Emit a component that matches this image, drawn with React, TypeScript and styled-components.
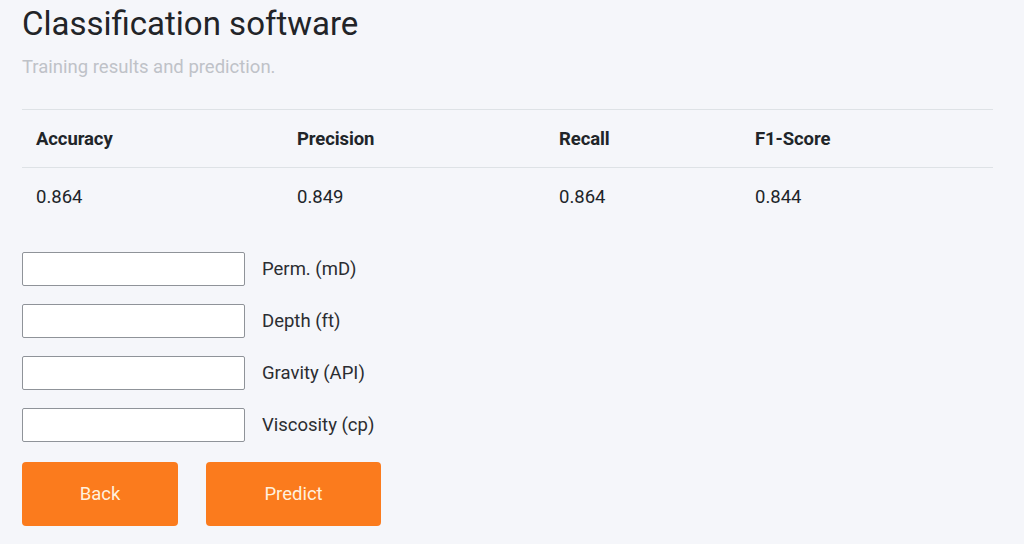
import styled, { createGlobalStyle } from 'styled-components';

const GlobalStyle = createGlobalStyle`
  body {
    margin: 0;
    background: #f5f6fa;
    font-family: Roboto, "Liberation Sans", sans-serif;
    color: #212529;
  }
`;

const metrics = [
  { name: 'Accuracy', value: '0.864' },
  { name: 'Precision', value: '0.849' },
  { name: 'Recall', value: '0.864' },
  { name: 'F1-Score', value: '0.844' },
];

const fields = ['Perm. (mD)', 'Depth (ft)', 'Gravity (API)', 'Viscosity (cp)'];

const App = () => {
  return (
    <Page>
      <GlobalStyle />
      <Title>Classification software</Title>
      <Subtitle>Training results and prediction.</Subtitle>

      <Table>
        <HeadRow>
          {metrics.map(m => <HeadCell key={m.name}>{m.name}</HeadCell>)}
        </HeadRow>
        <BodyRow>
          {metrics.map(m => <Cell key={m.name}>{m.value}</Cell>)}
        </BodyRow>
      </Table>

      <Form>
        {fields.map(f => (
          <FieldRow key={f}>
            <Input type="text" />
            <Label>{f}</Label>
          </FieldRow>
        ))}
      </Form>

      <Buttons>
        <Button width={156}>Back</Button>
        <Button width={175}>Predict</Button>
      </Buttons>
    </Page>
  );
};

const Page = styled.div`
  padding: 4px 31px 0 22px;
`;

const Title = styled.h1`
  margin: 0;
  font-size: 33px;
  font-weight: 400;
  line-height: 40px;
  color: #222428;
`;

const Subtitle = styled.p`
  margin: 13px 0 0;
  font-size: 18.5px;
  line-height: 20px;
  color: #bfc2c8;
`;

const Table = styled.div`
  margin-top: 32px;
  border-top: 1px solid #dee2e6;
`;

const HeadRow = styled.div`
  display: grid;
  grid-template-columns: 261px 262px 196px 1fr;
  height: 57px;
  align-items: center;
  border-bottom: 1px solid #dee2e6;
`;

const BodyRow = styled.div`
  display: grid;
  grid-template-columns: 261px 262px 196px 1fr;
  height: 57px;
  align-items: center;
`;

const HeadCell = styled.div`
  padding-left: 14px;
  font-size: 18.5px;
  font-weight: 700;
  color: #212529;
  letter-spacing: -0.1px;
`;

const Cell = styled.div`
  padding-left: 14px;
  font-size: 18.5px;
  color: #212529;
`;

const Form = styled.div`
  margin-top: 27px;
  display: flex;
  flex-direction: column;
  gap: 18px;
`;

const FieldRow = styled.div`
  display: flex;
  align-items: center;
  gap: 17px;
`;

const Input = styled.input`
  box-sizing: border-box;
  width: 223px;
  height: 34px;
  margin: 0;
  border: 1px solid #8f9399;
  border-radius: 2px;
  background: #fff;
  outline: none;
`;

const Label = styled.span`
  font-size: 18.5px;
  color: #2b2d31;
`;

const Buttons = styled.div`
  display: flex;
  gap: 28px;
  margin-top: 20px;
`;

const Button = styled.button<{ width: number }>`
  width: ${({ width }) => width}px;
  height: 64px;
  border: none;
  border-radius: 4px;
  background: #fb7b1d;
  color: #fff1df;
  font-family: Roboto, "Liberation Sans", sans-serif;
  font-size: 18.5px;
  cursor: pointer;
`;

export default App;
